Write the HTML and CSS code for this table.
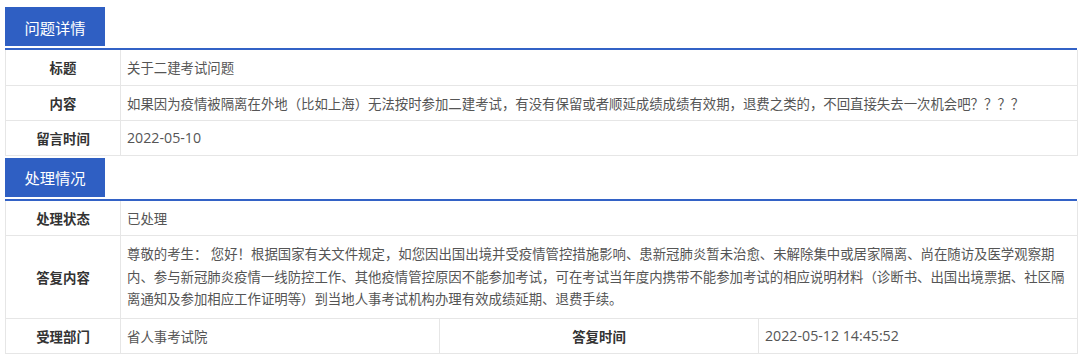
FILE: index.html
```html
<!DOCTYPE html>
<html lang="zh-CN">
<head>
<meta charset="utf-8">
<title>问题详情</title>
<link rel="stylesheet" href="styles.css">
</head>
<body>
<div class="page">
  <div class="section">
    <div class="sec-head first"><span class="tab">问题详情</span></div>
    <table class="info">
      <colgroup><col class="c-label"><col class="c-val"><col class="c-val"><col class="c-val"></colgroup>
      <tr><th>标题</th><td colspan="3">关于二建考试问题</td></tr>
      <tr><th>内容</th><td colspan="3">如果因为疫情被隔离在外地（比如上海）无法按时参加二建考试，有没有保留或者顺延成绩成绩有效期，退费之类的，不回直接失去一次机会吧？？？？</td></tr>
      <tr><th>留言时间</th><td colspan="3"><span class="num">2022-05-10</span></td></tr>
    </table>
  </div>
  <div class="section">
    <div class="sec-head"><span class="tab">处理情况</span></div>
    <table class="info">
      <colgroup><col class="c-label"><col class="c-val"><col class="c-val"><col class="c-val"></colgroup>
      <tr><th>处理状态</th><td colspan="3">已处理</td></tr>
      <tr class="tall"><th>答复内容</th><td colspan="3" class="long">尊敬的考生： 您好！根据国家有关文件规定，如您因出国出境并受疫情管控措施影响、患新冠肺炎暂未治愈、未解除集中或居家隔离、尚在随访及医学观察期内、参与新冠肺炎疫情一线防控工作、其他疫情管控原因不能参加考试，可在考试当年度内携带不能参加考试的相应说明材料（诊断书、出国出境票据、社区隔离通知及参加相应工作证明等）到当地人事考试机构办理有效成绩延期、退费手续。</td></tr>
      <tr><th>受理部门</th><td>省人事考试院</td><th>答复时间</th><td><span class="num">2022-05-12 14:45:52</span></td></tr>
    </table>
  </div>
</div>
</body>
</html>
```
FILE: styles.css
```css
html, body {
  margin: 0;
  padding: 0;
  background: #ffffff;
}
body {
  font-family: "Open Sans", "Noto Sans CJK SC", sans-serif;
  color: #555555;
}
.page {
  padding: 0 3px 0 5px;
  width: 1072px;
}
.sec-head {
  margin-top: 2px;
  padding-bottom: 2px;
  border-bottom: 2px solid #3362c6;
  display: flex;
}
.sec-head.first {
  margin-top: 7px;
}
.tab {
  width: 100px;
  height: 39px;
  background: #2f5fc3;
  color: #ffffff;
  font-size: 15.3px;
  display: flex;
  align-items: center;
  justify-content: center;
}
.info {
  width: 1072px;
  table-layout: fixed;
  border-collapse: collapse;
  font-size: 13.4px;
}
.c-label { width: 115px; }
.c-val { width: 319px; }
.info th,
.info td {
  border: 1px solid #e6e6e6;
  height: 35px;
  padding: 0;
  box-sizing: border-box;
}
.info tr:first-child th,
.info tr:first-child td {
  border-top: none;
}
.info th {
  font-weight: bold;
  color: #333333;
  text-align: center;
}
.info td {
  text-align: left;
  padding: 0 8px 0 6px;
}
.info td.long {
  line-height: 22.5px;
  padding-top: 7px;
  padding-bottom: 7px;
}
.num {
  font-size: 14.2px;
}
.tall th {
  height: 82px;
}
```
